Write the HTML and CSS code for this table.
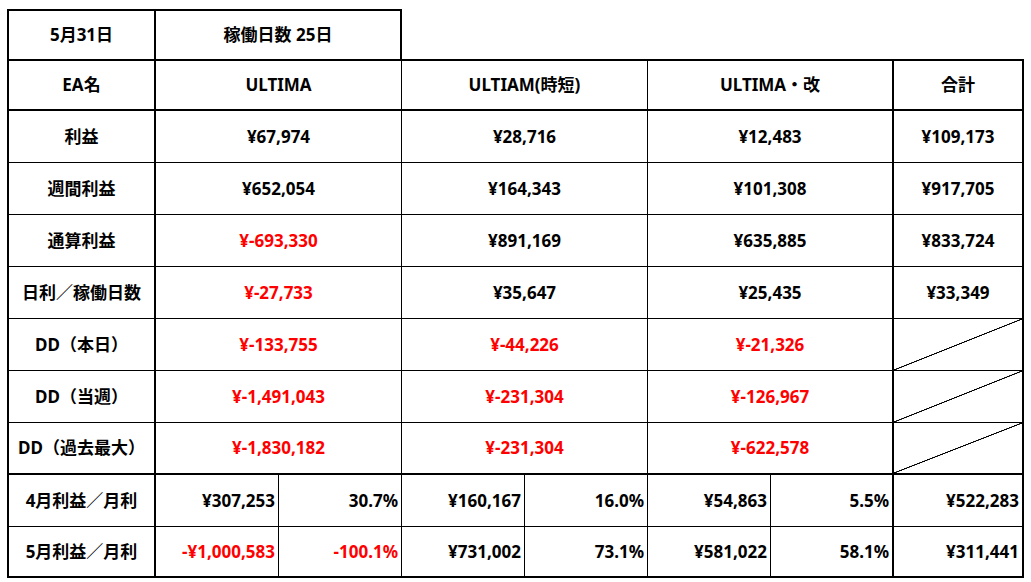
FILE: index.html
```html
<!DOCTYPE html>
<html lang="ja">
<head>
<meta charset="utf-8">
<title>ULTIMA 成績</title>
<link rel="stylesheet" href="styles.css">
</head>
<body>
<div class="sheet">
  <div class="row r-top">
    <div class="c first top">5月31日</div>
    <div class="c s2 top thickr">稼働日数 25日</div>
    <div class="c s5 blank"></div>
  </div>
  <div class="row r-head">
    <div class="c first">EA名</div>
    <div class="c s2">ULTIMA</div>
    <div class="c s2">ULTIAM(時短)</div>
    <div class="c s2 thickr">ULTIMA・改</div>
    <div class="c thickr">合計</div>
  </div>
  <div class="row">
    <div class="c first">利益</div>
    <div class="c s2">¥67,974</div>
    <div class="c s2">¥28,716</div>
    <div class="c s2 thickr">¥12,483</div>
    <div class="c thickr">¥109,173</div>
  </div>
  <div class="row">
    <div class="c first">週間利益</div>
    <div class="c s2">¥652,054</div>
    <div class="c s2">¥164,343</div>
    <div class="c s2 thickr">¥101,308</div>
    <div class="c thickr">¥917,705</div>
  </div>
  <div class="row">
    <div class="c first">通算利益</div>
    <div class="c s2 neg">¥-693,330</div>
    <div class="c s2">¥891,169</div>
    <div class="c s2 thickr">¥635,885</div>
    <div class="c thickr">¥833,724</div>
  </div>
  <div class="row">
    <div class="c first">日利／稼働日数</div>
    <div class="c s2 neg">¥-27,733</div>
    <div class="c s2">¥35,647</div>
    <div class="c s2 thickr">¥25,435</div>
    <div class="c thickr">¥33,349</div>
  </div>
  <div class="row">
    <div class="c first">DD（本日）</div>
    <div class="c s2 neg">¥-133,755</div>
    <div class="c s2 neg">¥-44,226</div>
    <div class="c s2 thickr neg">¥-21,326</div>
    <div class="c thickr diag"></div>
  </div>
  <div class="row">
    <div class="c first">DD（当週）</div>
    <div class="c s2 neg">¥-1,491,043</div>
    <div class="c s2 neg">¥-231,304</div>
    <div class="c s2 thickr neg">¥-126,967</div>
    <div class="c thickr diag"></div>
  </div>
  <div class="row r-sep">
    <div class="c first">DD（過去最大）</div>
    <div class="c s2 neg">¥-1,830,182</div>
    <div class="c s2 neg">¥-231,304</div>
    <div class="c s2 thickr neg">¥-622,578</div>
    <div class="c thickr diag"></div>
  </div>
  <div class="row">
    <div class="c first">4月利益／月利</div>
    <div class="c num">¥307,253</div>
    <div class="c num">30.7%</div>
    <div class="c num">¥160,167</div>
    <div class="c num">16.0%</div>
    <div class="c num">¥54,863</div>
    <div class="c num thickr">5.5%</div>
    <div class="c num thickr">¥522,283</div>
  </div>
  <div class="row r-last">
    <div class="c first">5月利益／月利</div>
    <div class="c num neg">-¥1,000,583</div>
    <div class="c num neg">-100.1%</div>
    <div class="c num">¥731,002</div>
    <div class="c num">73.1%</div>
    <div class="c num">¥581,022</div>
    <div class="c num thickr">58.1%</div>
    <div class="c num thickr">¥311,441</div>
  </div>
</div>
</body>
</html>
```

FILE: styles.css
```css
html, body {
  margin: 0;
  padding: 0;
  background: #ffffff;
}

body {
  padding: 9px 0 0 7px;
  font-family: "Noto Sans", "Noto Sans CJK JP", sans-serif;
  font-weight: 700;
  font-size: 17px;
  color: #000000;
}

.sheet {
  display: grid;
  grid-template-columns: 149px repeat(6, 123px) 130px;
  width: 1017px;
}

.row {
  display: contents;
}

.c {
  box-sizing: border-box;
  height: 52px;
  display: flex;
  align-items: center;
  justify-content: center;
  border-right: 1px solid #000;
  border-bottom: 1px solid #000;
  white-space: nowrap;
  line-height: 1;
  padding-bottom: 1px;
}

.s2 { grid-column: span 2; }
.s5 { grid-column: span 5; }

.first {
  border-left: 2px solid #000;
  border-right-width: 2px;
}

.top {
  border-top: 2px solid #000;
}

.thickr {
  border-right-width: 2px;
}

.r-top > .c,
.r-head > .c,
.r-sep > .c,
.r-last > .c {
  border-bottom-width: 2px;
}

.r-head > .c {
  height: 50px;
}

.r-last > .c {
  height: 51px;
}

.blank {
  border-right: none;
}

.num {
  justify-content: flex-end;
  padding-right: 3px;
}

.neg {
  color: #ff0000;
}

.diag {
  background: linear-gradient(to bottom right,
    transparent calc(50% - 0.7px),
    #000 calc(50% - 0.4px),
    #000 calc(50% + 0.4px),
    transparent calc(50% + 0.7px));
}
```
